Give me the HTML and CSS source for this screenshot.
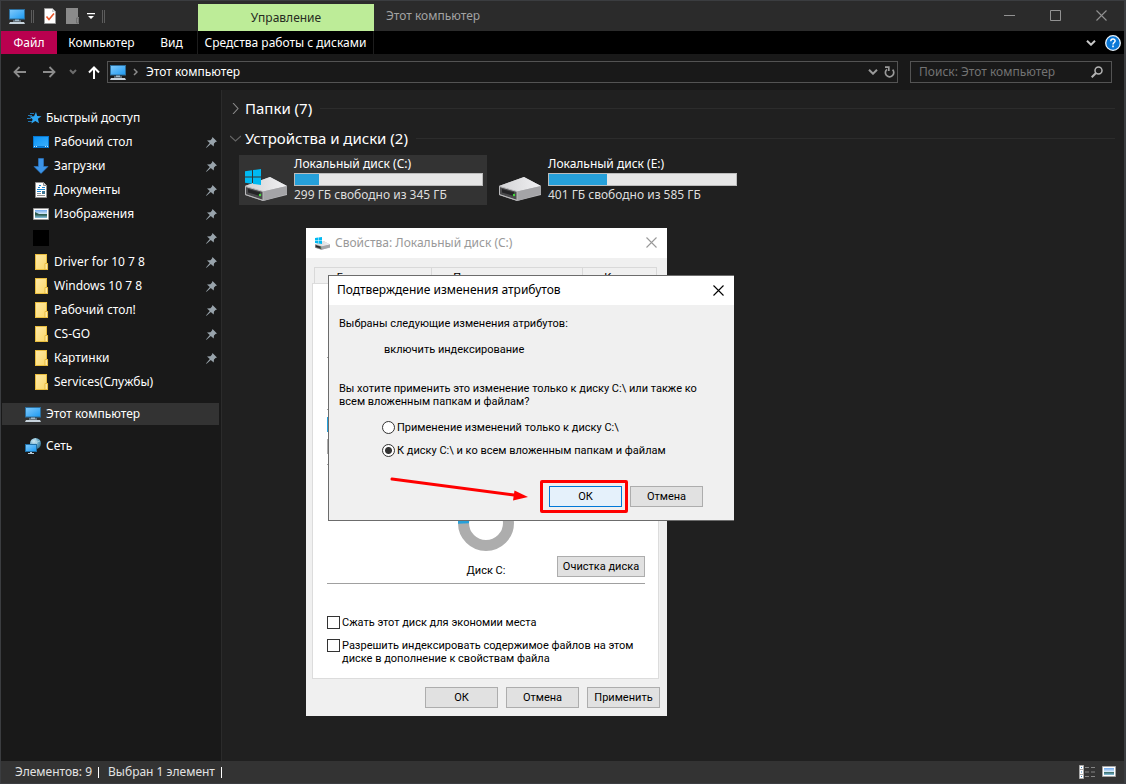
FILE: index.html
```html
<!DOCTYPE html>
<html lang="ru">
<head>
<meta charset="utf-8">
<title>Этот компьютер</title>
<link rel="stylesheet" href="styles.css">
</head>
<body>
<svg class="defs" aria-hidden="true">
  <defs>
    <linearGradient id="screen" x1="0" y1="0" x2="1" y2="1"><stop offset="0" stop-color="#7cc8fb"/><stop offset=".5" stop-color="#4fb2f7"/><stop offset="1" stop-color="#1e9bf2"/></linearGradient>
    <linearGradient id="desk" x1="0" y1="0" x2="1" y2="1"><stop offset="0" stop-color="#0b94f8"/><stop offset="1" stop-color="#3aaefb"/></linearGradient>
    <linearGradient id="yellow" x1="0" y1="0" x2="1" y2="1"><stop offset="0" stop-color="#ffe9a6"/><stop offset="1" stop-color="#fbd96c"/></linearGradient>
    <linearGradient id="metal" x1="0" y1="0" x2="1" y2="0"><stop offset="0" stop-color="#d2d2d4"/><stop offset="1" stop-color="#f1f1f3"/></linearGradient>
    <linearGradient id="view" x1="0" y1="0" x2="0" y2="1"><stop offset="0" stop-color="#6fa9ee"/><stop offset=".5" stop-color="#d5e8f8"/><stop offset=".55" stop-color="#3b6857"/><stop offset=".75" stop-color="#4f8791"/><stop offset="1" stop-color="#8cc4e4"/></linearGradient>
    <radialGradient id="globe" cx=".35" cy=".3" r=".8"><stop offset="0" stop-color="#d8edf6"/><stop offset=".5" stop-color="#6ba9c6"/><stop offset="1" stop-color="#2d6d8f"/></radialGradient>
  </defs>
  <symbol id="i-pc" viewBox="0 0 16 16"><path fill="#2c6e9c" d="M0 1h16v10.500H0z"/><path fill="url(#screen)" d="M1 2h14v8.500H1z"/><path fill="#9fb8c9" d="M6 11.500h4v1H6zM4 12.500h8v1H4z"/><path fill="#c7d3dc" d="M1 14h14l1 2H0z"/></symbol>
  <symbol id="i-star" viewBox="0 0 16 16"><path fill="#2da7f5" d="M10 2l1.200 4 4.300.2-3.600 2.600 1.100 4.500-3.700-2.400-3.900 2.600 1.200-4.300L3.500 6.600l4.500-.4z"/><path stroke="#2378b4" d="M4 3.500h4M2 5.500h4M1 8.500h4M2 11.500h4"/></symbol>
  <symbol id="i-desk" viewBox="0 0 16 16"><path fill="#0878d0" d="M0 2h16v12H0z"/><path fill="url(#desk)" d="M1 3h14v9H1z"/><path stroke="#c5e5ff" stroke-dasharray="1 1" d="M1 12.500h3M12 12.500h3"/></symbol>
  <symbol id="i-down" viewBox="0 0 16 16"><path fill="#3c94e8" stroke="#2b7cce" stroke-width=".6" d="M5.500.5h5v8H15L8 15.500 1 8.500h4.500z"/></symbol>
  <symbol id="i-doc" viewBox="0 0 16 16"><path fill="#fff" stroke="#8e8e8e" d="M2.500.5h8l3 3v12h-11z"/><path fill="#d8d8d8" stroke="#8e8e8e" d="M10.500.5v3h3"/><path stroke="#1b86d2" d="M6 3.500h2M5 5.500h2M9 5.500h3M4 7.500h8M4 9.500h4"/><path fill="#3f7896" d="M9 9h3v3H9z"/><path stroke="#8e8e8e" d="M4 11.500h4M4 13.500h8"/></symbol>
  <symbol id="i-img" viewBox="0 0 16 16"><path fill="#fff" stroke="#999" d="M.5 2.500h15v11H.5z"/><path fill="url(#view)" d="M2 4h12v8H2z"/><path fill="#2c5c50" d="M2 6l4 2 8 .5v1L2 9z"/></symbol>
  <symbol id="i-black" viewBox="0 0 16 16"><path d="M0 0h16v16H0z"/></symbol>
  <symbol id="i-folder" viewBox="0 0 16 16"><path fill="#e9bd3e" d="M2 0h12v9h1v7H2z"/><path fill="url(#yellow)" d="M3 1h10v14H3z"/><path fill="#ffe9a0" stroke="#dfaf2c" stroke-width=".7" d="M12 9.500h2.600v6H12z"/></symbol>
  <symbol id="i-net" viewBox="0 0 16 16"><circle cx="10.500" cy="5.500" r="5.500" fill="url(#globe)"/><path fill="none" stroke="#b5dbea" stroke-width=".7" d="M6 3q5 3 9 0M10 0q3 4 1 10"/><path fill="#1f6fa6" d="M0 6h12v8H0z"/><path fill="url(#screen)" d="M1 7h10v6H1z"/><path fill="#b7cbd8" d="M5 14h2v1h2v1H3v-1h2z"/></symbol>
  <symbol id="i-pin" viewBox="0 0 11 11"><path fill="#98a3ab" d="M6.500 0L11 4.500 9.500 5 8 6.500 7.700 9.500 4.800 7 .6 10.800 0 10.400 3.800 6 1 3.400 4.500 3.200 6 1.600z"/></symbol>
  <symbol id="i-drive" viewBox="0 0 42 24"><path fill="#b9b9bc" d="M0 9L25 0l17 9v9L18 24 0 18z"/><path fill="url(#metal)" d="M0 9L25 0l17 9-24 5.500z"/><path fill="#a4a4a7" d="M18 14.500L42 9v8L18 24z"/><path fill="#4b4b4d" stroke="#b9b9bb" d="M.5 9.500l17.500 5v8.800L.5 17.500z"/><path fill="#242426" d="M3 12l12 3.300V19L3 15.500z"/><circle cx="15" cy="18" r="1.200" fill="#44dd3d"/></symbol>
  <symbol id="i-win" viewBox="0 0 16 16"><path fill="#00b9f2" d="M0 2.200l7-1v6.400H0zM8 1l8-1v7.600H8zM0 8.500h7v6.300l-7-1zM8 8.500h8V16l-8-1.100z"/></symbol>
  <symbol id="i-x" viewBox="0 0 11 11"><path fill="none" stroke="currentColor" stroke-width="1.100" d="M.5.5l10 10M10.500.5l-10 10"/></symbol>
  <symbol id="i-chev" viewBox="0 0 10 6"><path fill="none" stroke="currentColor" stroke-width="2" d="M1 .7l4 4 4-4"/></symbol>
</svg>

<div class="window">
  <header class="titlebar">
    <div class="quick">
      <svg class="ic"><use href="#i-pc"/></svg>
      <i class="grip"></i>
      <svg class="ic q-doc" viewBox="0 0 16 16"><path fill="#fff" stroke="#9a9a9a" d="M2.500.5h8l3 3v12h-11z"/><path fill="#ccc" d="M10 1v3h3z"/><path fill="none" stroke="#e8562a" stroke-width="1.600" d="M4.500 8.500l2.500 3 5-6"/></svg>
      <svg class="ic q-fold" viewBox="0 0 16 16"><path fill="#8a8a8a" d="M2 0h12v9h1v7H2z"/><path fill="none" stroke="#6f6f6f" d="M12.500 10v5h2v-5z"/></svg>
      <svg class="q-drop" viewBox="0 0 8 8"><path fill="#fff" d="M0 1h8v1.200H0zM1 4h6L4 7z"/></svg>
      <i class="grip"></i>
    </div>
    <div class="context-tab">Управление</div>
    <div class="caption">Этот компьютер</div>
    <div class="sysbuttons">
      <button type="button" aria-label="Свернуть"><svg viewBox="0 0 11 11"><path stroke="currentColor" d="M0 5.500h11"/></svg></button>
      <button type="button" aria-label="Развернуть"><svg viewBox="0 0 11 11"><path fill="none" stroke="currentColor" d="M.5.5h10v10H.5z"/></svg></button>
      <button type="button" aria-label="Закрыть"><svg><use href="#i-x"/></svg></button>
    </div>
  </header>

  <nav class="ribbon">
    <button type="button" class="rt file">Файл</button>
    <button type="button" class="rt comp">Компьютер</button>
    <button type="button" class="rt look">Вид</button>
    <button type="button" class="rt tools">Средства работы с дисками</button>
    <div class="ribbon-end">
      <svg class="chev"><use href="#i-chev"/></svg>
      <svg class="help" viewBox="0 0 16 16"><circle cx="8" cy="8" r="7.300" fill="#0a78d7" stroke="#e8f2fb" stroke-width="1.300"/><path fill="none" stroke="#fff" stroke-width="1.500" d="M5.800 6.200c0-3 4.500-2.800 4.300-.2C10 7.500 8 7.600 8 9.500"/><path fill="#fff" d="M7.200 10.600h1.600v1.600H7.200z"/></svg>
    </div>
  </nav>

  <div class="addressrow">
    <div class="arrows">
      <svg class="back" viewBox="0 0 13 12"><path fill="none" stroke="#8c8c8c" stroke-width="1.800" d="M13 6H1.500M6.500 1l-5 5 5 5"/></svg>
      <svg class="fwd" viewBox="0 0 13 12"><path fill="none" stroke="#8c8c8c" stroke-width="1.800" d="M0 6h11.500M6.500 1l5 5-5 5"/></svg>
      <svg class="hist" viewBox="0 0 10 6"><path fill="none" stroke="#6c6c6c" stroke-width="2" d="M2 1l3 3 3-3"/></svg>
      <svg class="up" viewBox="0 0 12 13"><path fill="none" stroke="#fff" stroke-width="2" d="M6 13V2M1 6.500l5-5 5 5"/></svg>
    </div>
    <div class="address">
      <svg class="ic"><use href="#i-pc"/></svg>
      <svg class="sep" viewBox="0 0 5 8"><path fill="none" stroke="#8c8c8c" stroke-width="1.500" d="M1 1l3 3-3 3"/></svg>
      <span class="crumb">Этот компьютер</span>
      <svg class="chev"><use href="#i-chev"/></svg>
      <svg class="reload" viewBox="0 0 11 12"><path fill="none" stroke="#9a9a9a" stroke-width="1.700" d="M8.600 3.700A4.200 4.200 0 1 1 3 3.300M1 1.200h3.800V5"/></svg>
    </div>
    <label class="search">
      <input type="search" aria-label="Поиск" placeholder="Поиск: Этот компьютер">
      <svg viewBox="0 0 12 12"><circle cx="7.500" cy="4.500" r="3.500" fill="none" stroke="#b4b4b4" stroke-width="1.500"/><path stroke="#b4b4b4" stroke-width="2" d="M5 7L.7 11.300"/></svg>
    </label>
  </div>

  <div class="content">
    <aside class="sidebar">
      <a href="#" class="node top"><svg class="ic"><use href="#i-star"/></svg>Быстрый доступ</a>
      <a href="#" class="node"><svg class="ic"><use href="#i-desk"/></svg>Рабочий стол<svg class="pin"><use href="#i-pin"/></svg></a>
      <a href="#" class="node"><svg class="ic"><use href="#i-down"/></svg>Загрузки<svg class="pin"><use href="#i-pin"/></svg></a>
      <a href="#" class="node"><svg class="ic"><use href="#i-doc"/></svg>Документы<svg class="pin"><use href="#i-pin"/></svg></a>
      <a href="#" class="node"><svg class="ic"><use href="#i-img"/></svg>Изображения<svg class="pin"><use href="#i-pin"/></svg></a>
      <a href="#" class="node"><svg class="ic"><use href="#i-black"/></svg><svg class="pin"><use href="#i-pin"/></svg></a>
      <a href="#" class="node"><svg class="ic"><use href="#i-folder"/></svg>Driver for 10 7 8<svg class="pin"><use href="#i-pin"/></svg></a>
      <a href="#" class="node"><svg class="ic"><use href="#i-folder"/></svg>Windows 10 7 8<svg class="pin"><use href="#i-pin"/></svg></a>
      <a href="#" class="node"><svg class="ic"><use href="#i-folder"/></svg>Рабочий стол!<svg class="pin"><use href="#i-pin"/></svg></a>
      <a href="#" class="node"><svg class="ic"><use href="#i-folder"/></svg>CS-GO<svg class="pin"><use href="#i-pin"/></svg></a>
      <a href="#" class="node"><svg class="ic"><use href="#i-folder"/></svg>Картинки<svg class="pin"><use href="#i-pin"/></svg></a>
      <a href="#" class="node"><svg class="ic"><use href="#i-folder"/></svg>Services(Службы)</a>
      <a href="#" class="node root selected"><svg class="ic"><use href="#i-pc"/></svg>Этот компьютер</a>
      <a href="#" class="node root"><svg class="ic"><use href="#i-net"/></svg>Сеть</a>
    </aside>
    <main class="files">
      <h2 class="group"><svg viewBox="0 0 11 11"><path fill="none" stroke="#8a8a8a" stroke-width="1.100" d="M3 0l5 5.500L3 11"/></svg>Папки (7)</h2>
      <h2 class="group"><svg viewBox="0 0 11 11"><path fill="none" stroke="#666" stroke-width="1.100" d="M0 3l5.500 5L11 3"/></svg>Устройства и диски (2)</h2>
      <div class="drives">
        <div class="drive selected">
          <svg class="dicon" viewBox="0 0 42 32"><use href="#i-drive" y="8" width="42" height="24"/><use href="#i-win" width="16" height="16"/></svg>
          <div class="dinfo"><span class="dname">Локальный диск (C:)</span><div class="bar"><div class="fill" style="width:13%"></div></div><span class="free">299 ГБ свободно из 345 ГБ</span></div>
        </div>
        <div class="drive">
          <svg class="dicon" viewBox="0 0 42 32"><use href="#i-drive" y="8" width="42" height="24"/></svg>
          <div class="dinfo"><span class="dname">Локальный диск (E:)</span><div class="bar"><div class="fill" style="width:31%"></div></div><span class="free">401 ГБ свободно из 585 ГБ</span></div>
        </div>
      </div>
    </main>
  </div>

  <footer class="status">
    <span>Элементов: 9</span><i></i><span>Выбран 1 элемент</span><i></i>
    <div class="views">
      <svg viewBox="0 0 16 14"><path fill="#fff" stroke="#aaa" d="M.5.5h4v13h-4z"/><path stroke="#aaa" d="M0 4.500h5M0 9.500h5"/><path fill="#367fb9" d="M2 2h1v1H2zM2 6.500h1v1H2zM2 11h1v1H2z"/><path stroke="#858585" d="M6 2.500h4M12 2.500h4M6 7h4M12 7h4M6 11.500h4M12 11.500h4"/></svg>
      <svg class="big" viewBox="0 0 14 12"><path fill="#fff" stroke="#a5a5a5" d="M.5.5h13v10H.5z"/><path fill="url(#view)" d="M2 2h10v7H2z"/></svg>
    </div>
  </footer>
</div>

<section class="dialog props">
  <header class="dtitle"><svg class="ic" viewBox="0 0 16 16"><use href="#i-drive" x="1" y="6" width="15" height="9"/><use href="#i-win" x="1" y="2" width="7" height="7"/></svg><span>Свойства: Локальный диск (C:)</span>
    <button type="button" class="close" aria-label="Закрыть окно свойств"><svg><use href="#i-x"/></svg></button></header>
  <div class="tabs"><span class="tab t1">Безопасность</span><span class="tab t2">Предыдущие версии</span><span class="tab t3">Квота</span></div>
  <div class="panel">
    <div class="usage"><hr><hr><i class="used"></i><i class="avail"></i><hr></div>
    <div class="disk">
      <figure><svg viewBox="0 0 56 56"><circle cx="28" cy="28" r="22.500" fill="none" stroke="#adadad" stroke-width="11"/><path fill="none" stroke="#26a0da" stroke-width="11" d="M5.500 28.500A22.500 22.500 0 0 1 12 12"/></svg><figcaption>Диск C:</figcaption></figure>
      <button type="button" class="btn clean">Очистка диска</button>
    </div>
    <label class="check"><input type="checkbox"><span>Сжать этот диск для экономии места</span></label>
    <label class="check"><input type="checkbox"><span>Разрешить индексировать содержимое файлов на этом<br>диске в дополнение к свойствам файла</span></label>
  </div>
  <div class="dbuttons"><button type="button" class="btn">ОК</button><button type="button" class="btn">Отмена</button><button type="button" class="btn">Применить</button></div>
</section>

<section class="dialog confirm">
  <header class="dtitle"><span>Подтверждение изменения атрибутов</span>
    <button type="button" class="close" aria-label="Закрыть подтверждение"><svg><use href="#i-x"/></svg></button></header>
  <div class="cbody">
    <p>Выбраны следующие изменения атрибутов:</p>
    <p class="change">включить индексирование</p>
    <p class="question">Вы хотите применить это изменение только к диску C:\ или также ко<br>всем вложенным папкам и файлам?</p>
    <label class="radio"><input type="radio" name="scope"><span>Применение изменений только к диску C:\</span></label>
    <label class="radio"><input type="radio" name="scope" checked><span>К диску C:\ и ко всем вложенным папкам и файлам</span></label>
    <div class="cbuttons"><div class="marked"><button type="button" class="btn primary">ОК</button></div><button type="button" class="btn">Отмена</button></div>
  </div>
  <svg class="arrow" viewBox="0 0 140 26"><path stroke="#f00" stroke-width="3" stroke-linecap="round" d="M4 4l122 16"/><path fill="#f00" d="M140 22l-15 3.500 1.500-10z"/></svg>
</section>
</body>
</html>
```

FILE: styles.css
```css
* { box-sizing: border-box; }
body { margin: 0; height: 100vh; background: #3b3d40; font: 12px/16px "Noto Sans", "Open Sans", sans-serif; color: #fff; overflow: hidden; position: relative; }
button { font: inherit; color: inherit; border: 0; background: none; padding: 0; }
a { color: inherit; text-decoration: none; }
p, h2, figure, hr { margin: 0; }
svg { display: block; flex: none; }
.defs { position: absolute; width: 0; height: 0; }
.ic { width: 16px; height: 16px; }

.window { height: 100%; padding: 1px 2px 1px 1px; display: flex; flex-direction: column; }
.titlebar { height: 30px; flex: none; background: #2b2b2b; display: flex; align-items: stretch; }
.quick { width: 197px; display: flex; align-items: center; padding-left: 8px; }
.grip { width: 3px; height: 13px; border: solid #5c5c5c; border-width: 0 1px; margin-left: 6px; }
.q-doc { margin-left: 8px; }
.q-fold { margin-left: 6px; }
.q-drop { width: 8px; height: 8px; margin-left: 7px; margin-right: 1px; }
.context-tab { width: 176px; margin-top: 3px; background: #bdec98; color: #262b22; text-align: center; line-height: 28px; }
.caption { flex: 1; padding-left: 12px; line-height: 30px; color: #a3a3a3; }
.sysbuttons { display: flex; color: #929292; }
.sysbuttons button { width: 46px; display: grid; place-items: center; padding-bottom: 2px; }
.sysbuttons svg { width: 11px; height: 11px; }

.ribbon { height: 23px; flex: none; background: #000; display: flex; }
.rt { text-align: center; line-height: 23px; white-space: nowrap; }
.file { width: 56px; background: #b9004f; }
.comp { width: 89px; }
.look { width: 51px; }
.tools { width: 177px; border: solid #1d1d1d; border-width: 0 1px; }
.ribbon-end { margin-left: auto; display: flex; align-items: center; gap: 9px; padding-right: 3px; color: #c8c8c8; }
.chev { width: 10px; height: 6px; }
.help { width: 16px; height: 16px; }

.addressrow { height: 36px; flex: none; background: #191919; display: flex; align-items: center; padding-right: 12px; }
.arrows { width: 106px; display: flex; align-items: center; padding-left: 12px; }
.back, .fwd { width: 13px; height: 12px; }
.fwd { margin-left: 17px; }
.hist { width: 10px; height: 6px; margin-left: 12px; }
.up { width: 12px; height: 13px; margin-left: 10px; }
.address { flex: 1; height: 22px; border: 1px solid #535353; display: flex; align-items: center; padding: 0 2px; color: #9a9a9a; }
.sep { width: 5px; height: 8px; margin: 0 8px 0 7px; }
.crumb { flex: 1; color: #fff; }
.reload { width: 11px; height: 12px; margin-left: 6px; }
.search { width: 202px; height: 22px; margin-left: 12px; border: 1px solid #535353; display: flex; align-items: center; padding: 0 8px; }
.search input { flex: 1; min-width: 0; border: 0; padding: 0; background: none; font: inherit; color: #fff; }
.search input::placeholder { color: #737373; opacity: 1; }
.search svg { width: 12px; height: 12px; }

.content { flex: 1; min-height: 0; display: flex; background: #202020; }
.sidebar { width: 221px; flex: none; background: #191919; border-right: 1px solid #2b2b2b; padding: 16px 2px 0 1px; }
.node { height: 24px; display: flex; align-items: center; gap: 5px; padding-left: 31px; }
.node.top { padding-left: 24px; gap: 4px; }
.node.root { height: 22px; margin-top: 10px; padding-left: 23px; }
.node.root.selected { margin-top: 9px; background: #333; }
.pin { width: 11px; height: 11px; margin-left: auto; margin-right: 2px; }

.files { flex: 1; padding: 3px 9px 0 8px; }
.group { height: 30px; display: flex; align-items: center; gap: 4px; font-size: 15px; line-height: 20px; font-weight: 400; }
.group svg { width: 11px; height: 11px; }
.group::after { content: ""; flex: 1; height: 1px; margin-left: 4px; background: #2c2c2c; }
.drives { display: flex; gap: 6px; padding: 2px 0 0 9px; }
.drive { width: 248px; height: 50px; display: flex; padding-left: 6px; }
.drive.selected { background: #333; }
.dicon { width: 42px; height: 32px; margin-top: 14px; }
.dinfo { width: 189px; margin-left: 7px; display: flex; flex-direction: column; }
.dname { line-height: 18px; }
.bar { height: 13px; background: #e6e6e6; border: 1px solid #bcbcbc; }
.fill { height: 100%; background: #26a0da; }
.free { line-height: 17px; color: #dedede; }

.status { height: 22px; flex: none; background: #333; display: flex; align-items: center; padding: 0 8px 0 14px; color: #e2e2e2; }
.status > i { width: 1px; height: 11px; margin: 0 9px 0 6px; background: #fff; }
.views { margin-left: auto; display: flex; align-items: center; gap: 7px; }
.views svg { width: 16px; height: 14px; }
.views .big { width: 14px; height: 12px; }

.dialog { position: absolute; color: #000; background: #f0f0f0; font-family: Roboto, "Open Sans", sans-serif; font-size: 11px; line-height: 13px; }
.dtitle { height: 30px; background: #fff; display: flex; align-items: center; font-family: "Noto Sans", "Open Sans", sans-serif; font-size: 12px; line-height: 16px; }
.close { margin-left: auto; }
.close svg { width: 11px; height: 11px; }
.btn { width: 73px; height: 21px; background: #e1e1e1; border: 1px solid #adadad; text-align: center; white-space: nowrap; }

.props { left: 306px; top: 228px; width: 361px; padding-bottom: 8px; }
.props .dtitle { padding: 0 10px 1px 8px; gap: 5px; color: #999; }
.tabs { display: flex; height: 25px; padding: 9px 0 0 8px; }
.tab { border: solid #d9d9d9; border-width: 1px 0 0 1px; text-align: center; line-height: 12px; padding-top: 4px; height: 16px; overflow: hidden; }
.t1 { width: 117px; }
.t2 { width: 151px; }
.t3 { width: 75px; border-right-width: 1px; }
.panel { margin: 0 8px 0 6px; height: 396px; background: #fff; border: 1px solid #dcdcdc; padding: 0 13px 0 14px; }
.usage { height: 203px; padding-top: 73px; display: flex; flex-direction: column; }
hr { border: 0; height: 1px; width: 100%; background: #a0a0a0; flex: none; }
.usage hr + hr { margin-top: 51px; }
.usage i { width: 15px; height: 15px; margin-top: 7px; background: #26a0da; }
.usage .avail { background: #adadad; }
.usage .avail + hr { margin-top: 10px; }
.disk { display: flex; justify-content: flex-end; align-items: flex-end; border-bottom: 1px solid #a0a0a0; height: 98px; padding-bottom: 6px; gap: 43px; margin-top: -1px; }
.disk figure { width: 56px; text-align: center; }
.disk figure svg { width: 56px; height: 56px; margin-bottom: 13px; }
.disk .clean { width: 88px; }
.check { display: flex; align-items: flex-start; gap: 2px; margin-top: 10px; }
.disk + .check { margin-top: 32px; }
.check input { appearance: none; flex: none; margin: 0; width: 13px; height: 13px; border: 1px solid #333; background: #fff; }
.dbuttons { display: flex; justify-content: flex-end; gap: 8px; padding: 8px 7px 0 0; }

.confirm { left: 328px; top: 275px; width: 406px; border: solid #6c6c6c; border-width: 1px 0 1px 1px; }
.confirm .dtitle { height: 29px; padding: 0 10px 1px 8px; }
.cbody { padding: 12px 31px 7px 10px; }
.change { margin: 13px 0 26px 45px; }
.question { white-space: nowrap; }
.radio { display: flex; align-items: center; gap: 2px; margin: 10px 0 0 43px; }
.question + .radio { margin-top: 13px; }
.radio input { appearance: none; flex: none; margin: 0; width: 13px; height: 13px; border: 1px solid #333; border-radius: 50%; background: #fff; }
.radio input:checked { background: radial-gradient(circle, #333 3px, #fff 4px); }
.cbuttons { display: flex; justify-content: flex-end; align-items: center; gap: 2px; margin-top: 23px; }
.marked { width: 88px; height: 33px; display: flex; align-items: center; justify-content: flex-end; padding-right: 3px; border: 3px solid #f00; border-radius: 2px; }
.primary { background: #e5f1fb; border-color: #0078d7; }
.arrow { position: absolute; left: 59px; top: 199px; width: 140px; height: 26px; }
```
